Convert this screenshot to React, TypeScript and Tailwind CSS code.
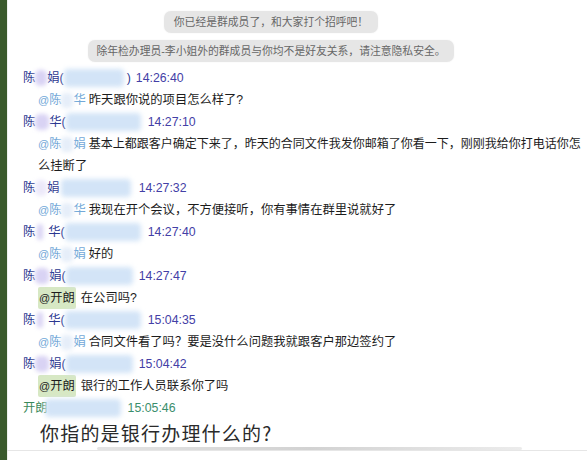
import React from "react";

const F = "font-['Liberation_Sans','Noto_Sans_CJK_SC',sans-serif]";

function Lav({ cls }: { cls: string }) {
  return <span className={`inline-block h-[16px] rounded-[5px] blur-[2px] bg-[#d9d3f4] ${cls}`} />;
}
function Blue({ cls }: { cls: string }) {
  return <span className={`inline-block h-[18px] rounded-[4px] blur-[2.5px] bg-[#d3e4f7] ${cls}`} />;
}
function Pale({ cls }: { cls: string }) {
  return <span className={`inline-block h-[15px] rounded-[4px] blur-[2px] bg-[#e6eef9] ${cls}`} />;
}

const nameC = "text-[#2b3890]";
const timeC = "text-[#4340a6]";
const menC = "text-[#72a8d8]";

function Header({ children }: { children: React.ReactNode }) {
  return <div className="h-[22px] flex items-center pl-[16px] whitespace-nowrap">{children}</div>;
}
function Msg({ children }: { children: React.ReactNode }) {
  return <div className="h-[22px] flex items-center pl-[31px] whitespace-nowrap text-[#1c1c1c]">{children}</div>;
}
function Men({ a, b }: { a: string; b: string }) {
  return (
    <>
      <span className={menC}>
        <span className="text-[11px]">@</span>
        {a}
      </span>
      <Pale cls="w-[12px]" />
      <span className={menC}>{b}</span>
    </>
  );
}
function Kai() {
  return (
    <span className="h-[22px] flex items-center px-[1px] bg-[#d7e8c4] rounded-[2px] text-[#1c1c1c]">
      <span className="text-[11px]">@</span>开朗
    </span>
  );
}

export default function App() {
  return (
    <div className={`w-[587px] h-[460px] overflow-hidden bg-white flex ${F} text-[12.3px] leading-none`}>
      <div className="w-[7px] shrink-0 bg-[#3a5a2c]" />
      <div className="w-px shrink-0 bg-[#eef1ec]" />
      <div className="flex-1 flex flex-col pt-[11px] -ml-px">
        <div className="w-[528px] flex flex-col items-center gap-[7px] text-[10.8px] text-[#666666]">
          <div className="h-[22px] flex items-center px-[10px] bg-[#e6e6e6] rounded-[7px] shadow-[0_0_2px_rgba(0,0,0,0.06)]">
            你已经是群成员了，和大家打个招呼吧！
          </div>
          <div className="h-[22px] flex items-center px-[8px] bg-[#e6e6e6] rounded-[7px] shadow-[0_0_2px_rgba(0,0,0,0.06)]">
            除年检办理员-李小姐外的群成员与你均不是好友关系，请注意隐私安全。
          </div>
        </div>

        <div className="mt-[5px] flex flex-col">
          <Header>
            <span className={nameC}>陈</span>
            <Lav cls="w-[12px]" />
            <span className={nameC}>娟(</span>
            <Blue cls="w-[60px]" />
            <span className={`${nameC} ml-[3px]`}>)</span>
            <span className={`${timeC} ml-[5px]`}>14:26:40</span>
          </Header>
          <Msg>
            <Men a="陈" b="华" />
            <span className="ml-[3px]">昨天跟你说的项目怎么样了?</span>
          </Msg>

          <Header>
            <span className={nameC}>陈</span>
            <Lav cls="w-[14px]" />
            <span className={nameC}>华(</span>
            <Blue cls="w-[75px]" />
            <span className={`${timeC} ml-[7px]`}>14:27:10</span>
          </Header>
          <Msg>
            <Men a="陈" b="娟" />
            <span className="ml-[3px] text-[12px]">基本上都跟客户确定下来了，昨天的合同文件我发你邮箱了你看一下，刚刚我给你打电话你怎</span>
          </Msg>
          <Msg>
            <span>么挂断了</span>
          </Msg>

          <Header>
            <span className={nameC}>陈</span>
            <Lav cls="w-[12px] opacity-50" />
            <span className={nameC}>娟</span>
            <Blue cls="w-[70px] ml-[1px]" />
            <span className={`${timeC} ml-[8px]`}>14:27:32</span>
          </Header>
          <Msg>
            <Men a="陈" b="华" />
            <span className="ml-[3px]">我现在开个会议，不方便接听，你有事情在群里说就好了</span>
          </Msg>

          <Header>
            <span className={nameC}>陈</span>
            <Lav cls="w-[6px] ml-[2px]" />
            <span className={`${nameC} ml-[5px]`}>华(</span>
            <Blue cls="w-[76px]" />
            <span className={`${timeC} ml-[7px]`}>14:27:40</span>
          </Header>
          <Msg>
            <Men a="陈" b="娟" />
            <span className="ml-[3px]">好的</span>
          </Msg>

          <Header>
            <span className={nameC}>陈</span>
            <Lav cls="w-[14px]" />
            <span className={nameC}>娟(</span>
            <Blue cls="w-[67px]" />
            <span className={`${timeC} ml-[6px]`}>14:27:47</span>
          </Header>
          <Msg>
            <Kai />
            <span className="ml-[5px]">在公司吗?</span>
          </Msg>

          <Header>
            <span className={nameC}>陈</span>
            <Lav cls="w-[6px] ml-[2px]" />
            <span className={`${nameC} ml-[5px]`}>华(</span>
            <Blue cls="w-[76px]" />
            <span className={`${timeC} ml-[7px]`}>15:04:35</span>
          </Header>
          <Msg>
            <Men a="陈" b="娟" />
            <span className="ml-[3px]">合同文件看了吗？要是没什么问题我就跟客户那边签约了</span>
          </Msg>

          <Header>
            <span className={nameC}>陈</span>
            <Lav cls="w-[14px]" />
            <span className={nameC}>娟(</span>
            <Blue cls="w-[67px]" />
            <span className={`${timeC} ml-[6px]`}>15:04:42</span>
          </Header>
          <Msg>
            <Kai />
            <span className="ml-[5px]">银行的工作人员联系你了吗</span>
          </Msg>

          <Header>
            <span className="text-[#3a8a5a]">开朗</span>
            <Blue cls="w-[76px] -ml-[3px]" />
            <span className="text-[#3a8e6c] ml-[7px]">15:05:46</span>
          </Header>
          <div className="h-[26px] flex items-center pl-[33px] whitespace-nowrap text-[19px] tracking-[1.2px] text-[#2a2a2a] font-['Noto_Sans_CJK_SC',sans-serif]">
            你指的是银行办理什么的?
          </div>
        </div>

        <div className="mt-[2px] ml-[90px] w-[425px] h-[3px] bg-gradient-to-r from-[#e4e4e4] via-[#d2d2d2] to-[#ececec] rounded-[2px]" />
        <div className="h-px bg-[#e6e6e6]" />
      </div>
    </div>
  );
}
